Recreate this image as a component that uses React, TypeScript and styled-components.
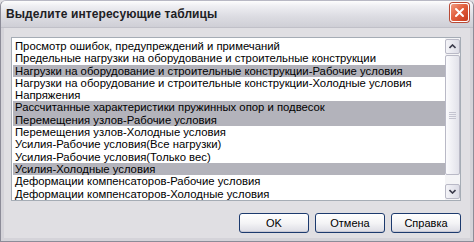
import React from "react";
import styled, { createGlobalStyle } from "styled-components";

const GlobalStyle = createGlobalStyle`
	html, body {
		margin: 0;
		padding: 0;
		background: #e0dfe3;
	}
	body {
		font-family: "Liberation Sans", Arial, sans-serif;
	}
`;

const tables = [
	{ name: "Просмотр ошибок, предупреждений и примечаний", selected: false },
	{ name: "Предельные нагрузки на оборудование и строительные конструкции", selected: false },
	{ name: "Нагрузки на оборудование и строительные конструкции-Рабочие условия", selected: true },
	{ name: "Нагрузки на оборудование и строительные конструкции-Холодные условия", selected: false },
	{ name: "Напряжения", selected: false },
	{ name: "Рассчитанные характеристики пружинных опор и подвесок", selected: true },
	{ name: "Перемещения узлов-Рабочие условия", selected: true },
	{ name: "Перемещения узлов-Холодные условия", selected: false },
	{ name: "Усилия-Рабочие условия(Все нагрузки)", selected: false },
	{ name: "Усилия-Рабочие условия(Только вес)", selected: false },
	{ name: "Усилия-Холодные условия", selected: true },
	{ name: "Деформации компенсаторов-Рабочие условия", selected: false },
	{ name: "Деформации компенсаторов-Холодные условия", selected: false }
];

const Window = styled.div`
	width: 474px;
	height: 242px;
	box-sizing: border-box;
	display: flex;
	flex-direction: column;
	background: #e0dfe3;
	border: 1px solid #8c8c98;
	border-top-color: #b8b8c4;
	border-radius: 6px 6px 0 0;
	overflow: hidden;
`;

const TitleBar = styled.div`
	height: 27px;
	flex: none;
	display: flex;
	align-items: center;
	justify-content: space-between;
	padding: 0 4px 1px 5px;
	box-sizing: border-box;
	background: linear-gradient(#fdfdfd 0%, #eeeef2 20%, #dcdce2 60%, #cfcfd6 100%);
	border-bottom: 1px solid #c0c0c8;
`;

const Title = styled.span`
	font-size: 12px;
	font-weight: bold;
	color: #202024;
	letter-spacing: 0.1px;
`;

const CloseButton = styled.div`
	width: 19px;
	height: 19px;
	box-sizing: border-box;
	margin-bottom: 2px;
	border: 1px solid #ffffff;
	border-radius: 3px;
	background: linear-gradient(135deg, #f09a80 0%, #e2603e 45%, #c8381c 100%);
	box-shadow: 0 0 0 1px #b84a36;
	display: flex;
	align-items: center;
	justify-content: center;
`;

const Body = styled.div`
	flex: 1;
	display: flex;
	flex-direction: column;
	padding: 9px 9px 0 7px;
	border-left: 3px solid #d4d3d9;
	border-right: 3px solid #d4d3d9;
	border-bottom: 3px solid #d4d3d9;
`;

const ListBox = styled.div`
	height: 164px;
	box-sizing: border-box;
	display: flex;
	background: #ffffff;
	border: 1px solid #a5acb5;
`;

const Rows = styled.div`
	flex: 1;
	padding: 2px 0 0 1px;
	overflow: hidden;
`;

const Row = styled.div<{ selected: boolean }>`
	height: 12.3px;
	line-height: 12.3px;
	padding-left: 2px;
	font-size: 11.3px;
	color: #000000;
	white-space: nowrap;
	background: ${props => (props.selected ? "#b3b3bb" : "transparent")};
`;

const ScrollBar = styled.div`
	width: 15px;
	flex: none;
	display: flex;
	flex-direction: column;
	background: #f4f4f6;
	padding: 1px 0;
	box-sizing: border-box;
`;

const ArrowButton = styled.div`
	height: 15px;
	flex: none;
	box-sizing: border-box;
	border: 1px solid #b9b9c6;
	border-radius: 2px;
	background: linear-gradient(90deg, #f4f4f8, #dcdce6);
	display: flex;
	align-items: center;
	justify-content: center;
`;

const Track = styled.div`
	flex: 1;
	display: flex;
	flex-direction: column;
	padding: 1px 0;
`;

const Thumb = styled.div`
	height: 120px;
	box-sizing: border-box;
	border: 1px solid #b9b9c6;
	border-radius: 2px;
	background: linear-gradient(90deg, #fbfbfd, #e2e2ea);
	display: flex;
	flex-direction: column;
	align-items: center;
	justify-content: center;
	gap: 1px;
`;

const Grip = styled.div`
	width: 7px;
	height: 1px;
	background: #c4c4d0;
`;

const Footer = styled.div`
	display: flex;
	justify-content: flex-end;
	gap: 6px;
	margin-top: 12px;
`;

const Button = styled.div`
	width: 70px;
	height: 20px;
	box-sizing: border-box;
	border: 1px solid #1c3a6e;
	border-radius: 3px;
	background: linear-gradient(#ffffff 0%, #f4f4f6 50%, #dcdce4 100%);
	box-shadow: inset 0 -1px 0 #c8c8d4;
	display: flex;
	align-items: center;
	justify-content: center;
	font-size: 11px;
	color: #000000;
`;

const Chevron = ({ up }: { up?: boolean }) => (
	<svg width="7" height="5" viewBox="0 0 7 5">
		<path
			d={up ? "M0.5 4 L3.5 1 L6.5 4" : "M0.5 1 L3.5 4 L6.5 1"}
			fill="none"
			stroke="#3c3c4c"
			strokeWidth="1.6"
		/>
	</svg>
);

export default function App() {
	return (
		<>
			<GlobalStyle />
			<Window>
				<TitleBar>
					<Title>Выделите интересующие таблицы</Title>
					<CloseButton>
						<svg width="11" height="11" viewBox="0 0 11 11">
							<path d="M2 2 L9 9 M9 2 L2 9" stroke="#ffffff" strokeWidth="2" strokeLinecap="round" />
						</svg>
					</CloseButton>
				</TitleBar>
				<Body>
					<ListBox>
						<Rows>
							{tables.map(t => (
								<Row key={t.name} selected={t.selected}>
									{t.name}
								</Row>
							))}
						</Rows>
						<ScrollBar>
							<ArrowButton>
								<Chevron up />
							</ArrowButton>
							<Track>
								<Thumb>
									<Grip />
									<Grip />
									<Grip />
									<Grip />
								</Thumb>
							</Track>
							<ArrowButton>
								<Chevron />
							</ArrowButton>
						</ScrollBar>
					</ListBox>
					<Footer>
						<Button>OK</Button>
						<Button>Отмена</Button>
						<Button>Справка</Button>
					</Footer>
				</Body>
			</Window>
		</>
	);
}
